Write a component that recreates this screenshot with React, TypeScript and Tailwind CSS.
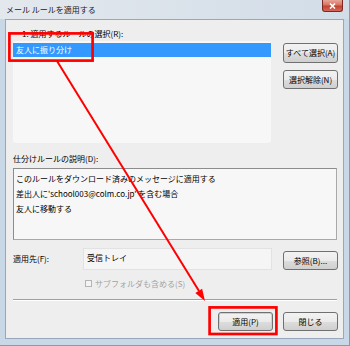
import React from 'react';

const font = { fontFamily: '"Noto Sans CJK JP", "Noto Sans", sans-serif' };

const btn =
  'flex items-center justify-center rounded-[3px] border border-[#707070] bg-[linear-gradient(#f2f2f2_0%,#ebebeb_50%,#dddddd_51%,#cfcfcf_100%)] text-[8px] leading-none text-black';

const VistaButton = ({ label, focused = false, className = '' }: { label: string; focused?: boolean; className?: string }) => (
  <div
    className={`${btn} ${className} ${
      focused ? 'border-[#3c7fb1] shadow-[inset_0_0_0_1px_#a8dcf5]' : ''
    }`}
  >
    {label}
  </div>
);

// red annotation: boxes + arrow drawn over the dialog
const Annotation = () => (
  <svg className="absolute inset-0 pointer-events-none" width={350} height={346} viewBox="0 0 350 346">
    <rect x={9.4} y={33.4} width={83.2} height={27.2} fill="none" stroke="#ff0000" strokeWidth={2.7} />
    <rect x={209.6} y={307.4} width={66.8} height={26.6} fill="none" stroke="#ff0000" strokeWidth={2.7} />
    <line x1={57} y1={61} x2={199} y2={291} stroke="#ff0000" strokeWidth={2} />
    <polygon points="205,301 195.3,292.9 202.1,288.7" fill="#ff0000" />
  </svg>
);

export default function App() {
  return (
    <div
      className="relative w-[350px] h-[346px] flex flex-col overflow-hidden bg-[#c9d8e6] border-r border-b border-[#7f9db9]"
      style={font}
    >
      {/* title bar */}
      <div className="h-[19px] flex items-center justify-between bg-[linear-gradient(to_right,#e3e8ed,#d2dde8)]">
        <span className="pl-[6px] text-[8px] leading-none text-[#1a1a1a]">メール ルールを適用する</span>
        <div className="self-start mr-[6px] w-[21px] h-[12px] rounded-b-[3px] border border-t-0 border-[#7a2a22] bg-[linear-gradient(#e8a597_0%,#d47564_45%,#c4412e_55%,#d6685a_100%)] flex items-center justify-center">
          <svg width="7" height="6" viewBox="0 0 7 6">
            <path d="M1 0.5 L6 5.5 M6 0.5 L1 5.5" stroke="#ffffff" strokeWidth="1.6" />
          </svg>
        </div>
      </div>

      {/* client area */}
      <div className="flex-1 mx-[5px] mb-[6px] border border-[#98a8b8] bg-[#eeeeee] pl-[7px] pr-[5px] flex flex-col text-[8px] text-black">
        <div className="mt-[8px] ml-[9px] h-[11px] leading-[11px]">1. 適用するルールの選択(R):</div>

        <div className="mt-[2px] flex">
          <div className="w-[258px] h-[102px] rounded-[3px] bg-[#f7f7f7] pt-[2px]">
            <div className="h-[14px] bg-[#3399ff] text-white leading-[14px] pl-[3px]">友人に振り分け</div>
          </div>
          <div className="ml-auto w-[55px] pt-[2px] flex flex-col gap-[7px]">
            <VistaButton label="すべて選択(A)" className="h-[20px]" />
            <VistaButton label="選択解除(N)" className="h-[19px]" />
          </div>
        </div>

        <div className="mt-[10px] h-[11px] leading-[11px]">仕分けルールの説明(D):</div>
        <div className="mt-[4px] mr-[1px] h-[72px] border border-[#a9a9a9] border-t-[#8c8c8c] border-l-[#8c8c8c] bg-[#f7f7f7] pt-[2px] pl-[2px]">
          <div className="leading-[15px]">このルールをダウンロード済みのメッセージに適用する</div>
          <div className="leading-[15px]">差出人に'school003@colm.co.jp' を含む場合</div>
          <div className="leading-[15px]">友人に移動する</div>
        </div>

        <div className="mt-[8px] flex items-start">
          <div className="w-[70px] h-[22px] flex items-center">適用先(F):</div>
          <div className="w-[189px] h-[22px] border border-[#e2e2e2] bg-[#f5f5f5] pl-[3px] pt-[3px] leading-[11px]">
            受信トレイ
          </div>
          <VistaButton label="参照(B)..." className="ml-auto mt-[3px] w-[55px] h-[19px]" />
        </div>

        <div className="mt-[8px] ml-[72px] h-[11px] flex items-center gap-[3px] text-[#a3a3a3]">
          <div className="w-[7px] h-[7px] border border-[#b4b4b4] bg-[#f4f4f4]" />
          <span className="leading-[11px]">サブフォルダも含める(S)</span>
        </div>

        <div className="mt-[10px] mr-[1px] h-[1px] bg-[#a0a0a0] shadow-[0_1px_0_#ffffff]" />

        <div className="mt-[12px] flex justify-end gap-[10px]">
          <VistaButton label="適用(P)" focused className="w-[55px] h-[19px]" />
          <VistaButton label="閉じる" className="w-[55px] h-[19px]" />
        </div>
      </div>

      <Annotation />
    </div>
  );
}
